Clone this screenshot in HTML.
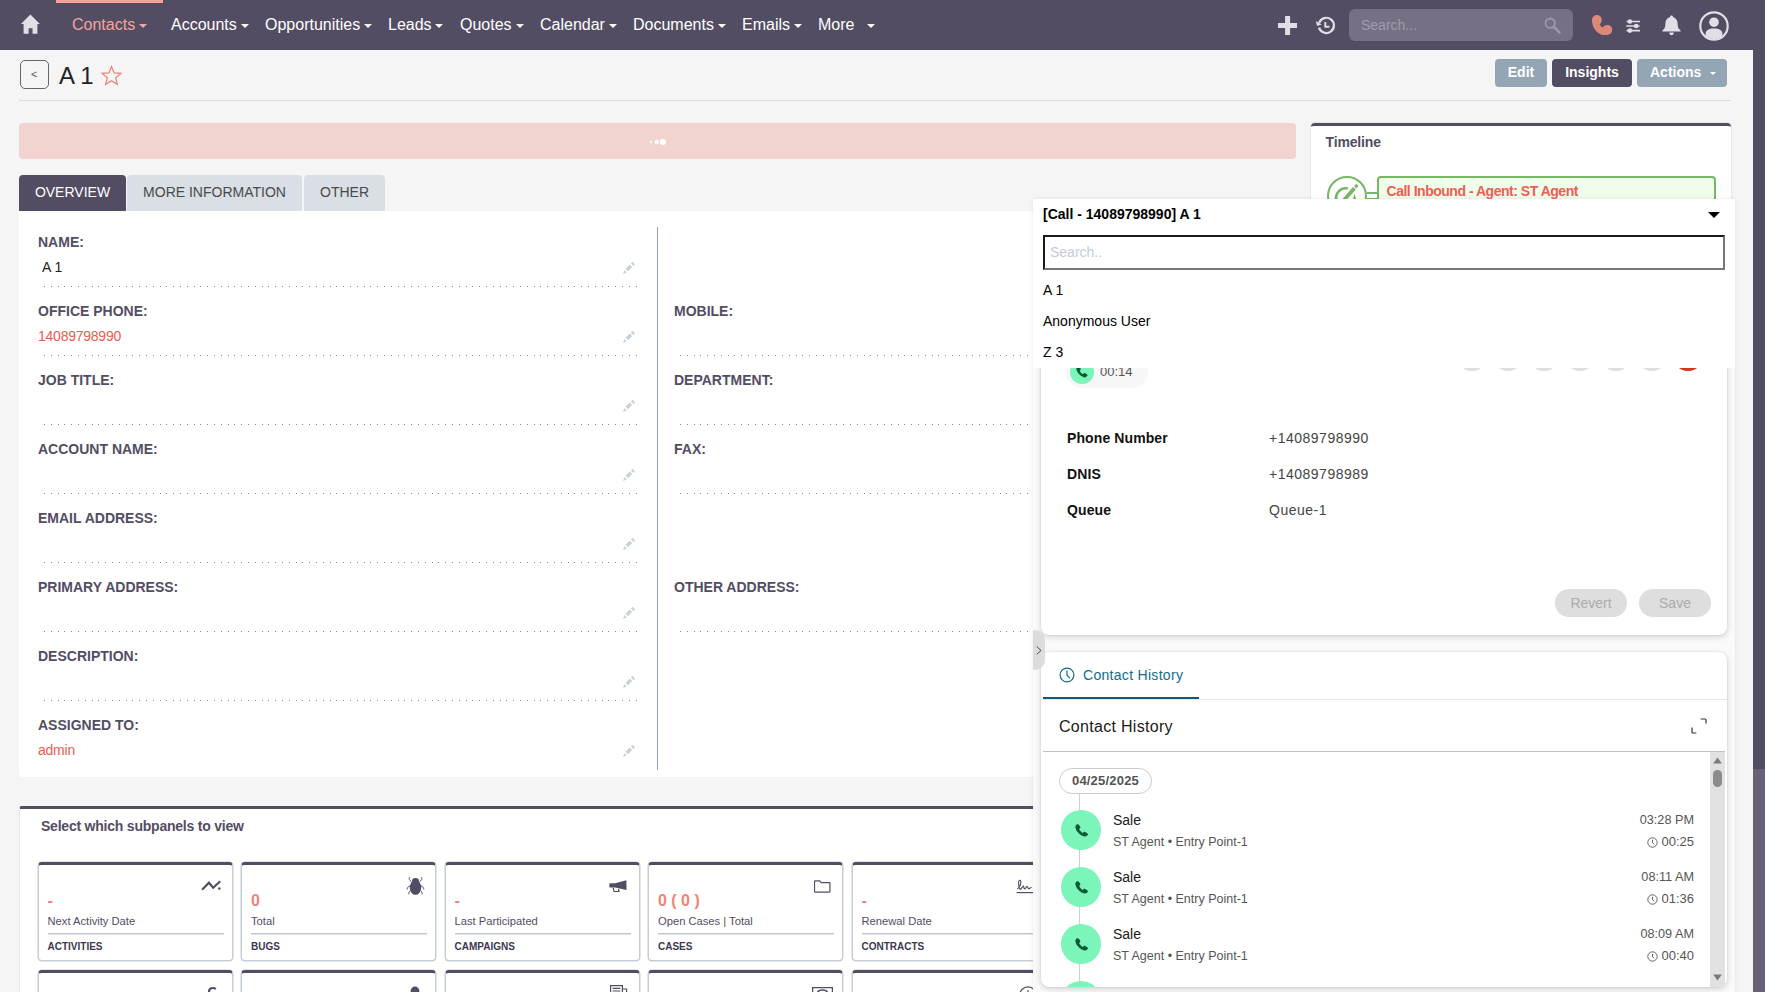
<!DOCTYPE html>
<html lang="en">
<head>
<meta charset="utf-8">
<title>A 1 - Contacts</title>
<style>
*{box-sizing:border-box;margin:0;padding:0}
html,body{width:1765px;height:992px;overflow:hidden}
body{background:#f5f5f5;font-family:"Liberation Sans",Arial,sans-serif;font-size:14px;color:#222;position:relative}
.abs{position:absolute}
.t{position:absolute;white-space:nowrap;line-height:20px}
/* ---------- top nav ---------- */
#nav{position:absolute;left:0;top:0;width:1765px;height:50px;background:#534d64}
#nav .mi{position:absolute;top:15px;font-size:16px;line-height:20px;color:#fff;white-space:nowrap}
#nav .mi.on{color:#f4a49b}
#nav .car{position:absolute;top:24px;width:0;height:0;border-left:4px solid transparent;border-right:4px solid transparent;border-top:4px solid #fff}
#nav .car.on{border-top-color:#f4a49b}
#activebar{position:absolute;left:56px;top:0;width:107px;height:3px;background:#f4a49b}
#gsearch{position:absolute;left:1349px;top:9px;width:224px;height:32px;border-radius:6px;background:#777085}
#gsearch span{position:absolute;left:12px;top:6px;font-size:14px;line-height:20px;color:#a09aae}
/* page scrollbar */
#sbtrack{position:absolute;left:1753px;top:50px;width:12px;height:942px;background:#686179}
#sbthumb{position:absolute;left:1753px;top:0;width:12px;height:769px;background:#534d64}
/* ---------- title row ---------- */
#back{position:absolute;left:20px;top:60px;width:29px;height:29px;border:1px solid #666;border-radius:5px;background:#f5f5f5}
#back span{position:absolute;left:10px;top:3px;font-size:11px;line-height:20px;color:#555}
#title{position:absolute;left:59px;top:61px;font-size:24px;line-height:30px;color:#222;white-space:nowrap}
.btn{position:absolute;top:59px;height:28px;border-radius:4px;background:#94a6b5;color:#fff;font-weight:bold;font-size:14px;line-height:26px;text-align:center;white-space:nowrap}
#hr{position:absolute;left:19px;top:100px;width:1712px;height:1px;background:#dcdcdc}
/* ---------- detail panel ---------- */
#pink{position:absolute;left:19px;top:123px;width:1277px;height:36px;border-radius:4px;background:#f1d4cf}
.tab{position:absolute;top:175px;height:36px;border-radius:4px 4px 0 0;background:#d9dfe4;color:#4a4a4a;font-size:14px;line-height:34px;text-align:center;white-space:nowrap}
.tab.on{background:#534d64;color:#fff}
#detail{position:absolute;left:19px;top:211px;width:1277px;height:566px;background:#fff;border-radius:0 0 4px 4px}
.lbl{position:absolute;font-weight:bold;font-size:14px;line-height:20px;color:#534d64;white-space:nowrap}
.val{position:absolute;font-size:14px;line-height:20px;white-space:nowrap}
.red{color:#e85d4f;letter-spacing:-.24px}
.dots{position:absolute;height:1px;background-image:repeating-linear-gradient(90deg,#8c8c8c 0,#8c8c8c 1px,transparent 1px,transparent 6.8px)}
.pen{position:absolute;width:13px;height:13px}
#vdiv{position:absolute;left:657px;top:227px;width:1px;height:543px;background:#8ea0b2}
/* ---------- subpanels ---------- */
#sub{position:absolute;left:19px;top:806px;width:1277px;height:200px;background:#fff;border-top:3px solid #534d64;border-left:1px solid #e3e6ea;border-radius:3px 3px 0 0}
.card{position:absolute;width:195px;height:99px;background:#fff;border:1px solid #c5cdd6;border-top:3px solid #534d64;border-radius:4px;box-shadow:0 0 0 .5px #c5cdd6}
.card .big{position:absolute;left:9px;top:26px;font-size:16px;font-weight:bold;line-height:20px;color:#f08377;white-space:nowrap}
.card .sm{position:absolute;left:9px;top:46px;font-size:11.2px;line-height:20px;color:#534d64;white-space:nowrap}
.card .ln{position:absolute;left:9px;top:68px;width:176px;height:1px;background:#bcc6d0;box-shadow:0 1px 0 rgba(201,209,218,.55)}
.card .nm{position:absolute;left:9px;top:72px;font-size:10px;font-weight:bold;line-height:20px;color:#3d3850;white-space:nowrap}
.card svg{position:absolute}
/* ---------- timeline ---------- */
#tl{position:absolute;left:1311px;top:123px;width:420px;height:300px;background:#fff;border-top:3px solid #534d64;border-radius:4px 4px 0 0;box-shadow:0 0 2px rgba(0,0,0,.18)}
/* ---------- widget ---------- */
#wx{position:absolute;left:1033px;top:199px;width:702px;height:800px;background:#fafafa;box-shadow:0 0 5px rgba(0,0,0,.09);font-family:"Liberation Sans",Arial,sans-serif}
.wcard{position:absolute;background:#fff;border-radius:8px;box-shadow:0 2px 6px rgba(0,0,0,.16),0 0 2px rgba(0,0,0,.12)}
#dd{position:absolute;left:1033px;top:199px;width:702px;height:169px;background:#fff}
.cb{top:339px;width:32px;height:32px;border-radius:50%;background:#dedede}
.wl{font-size:14px;font-weight:bold;color:#111;letter-spacing:.1px}
.wv{font-size:14px;color:#444;letter-spacing:.5px}
.pill{top:589px;width:72px;height:28px;border-radius:14px;background:#dedede;color:#ababab;font-size:14px;line-height:28px;text-align:center}
</style>
</head>
<body>

<!-- ================= NAV ================= -->
<div id="nav">
  <div id="activebar"></div>
  <svg class="abs" style="left:20px;top:14px" width="21" height="21" viewBox="0 0 21 21"><path d="M10.4 0.5 L19.9 10 L17.4 10 L17.4 19.7 L12.5 19.7 L12.5 14.3 L8.6 14.3 L8.6 19.7 L3.6 19.7 L3.6 10 L0.9 10 Z" fill="#e1dee6"/></svg>
  <span class="mi on" style="left:72px">Contacts</span><i class="car on" style="left:139px"></i>
  <span class="mi" style="left:171px">Accounts</span><i class="car" style="left:241px"></i>
  <span class="mi" style="left:265px">Opportunities</span><i class="car" style="left:364px"></i>
  <span class="mi" style="left:388px">Leads</span><i class="car" style="left:435px"></i>
  <span class="mi" style="left:460px">Quotes</span><i class="car" style="left:516px"></i>
  <span class="mi" style="left:540px">Calendar</span><i class="car" style="left:609px"></i>
  <span class="mi" style="left:633px">Documents</span><i class="car" style="left:718px"></i>
  <span class="mi" style="left:742px">Emails</span><i class="car" style="left:794px"></i>
  <span class="mi" style="left:818px">More</span><i class="car" style="left:867px"></i>

  <!-- plus -->
  <svg class="abs" style="left:1278px;top:16px" width="19.2" height="19.2" viewBox="0 0 19.2 19.2"><path d="M7.1 0h5v7.1h7.1v5h-7.1v7.1h-5v-7.1H0v-5h7.1z" fill="#e1dee6"/></svg>
  <!-- history -->
  <svg class="abs" style="left:1315px;top:16px" width="21" height="20" viewBox="0 0 21 20"><path d="M4.16 6.8 A7.6 7.6 0 1 1 4.03 11.62" fill="none" stroke="#e1dee6" stroke-width="2.2"/><path d="M0.8 4.9 L6.7 8.5 L2.1 10.1 Z" fill="#e1dee6"/><path d="M10.3 5.9 V10.7 H14.4" fill="none" stroke="#e1dee6" stroke-width="1.9"/></svg>
  <div id="gsearch"><span>Search...</span>
    <svg class="abs" style="left:195px;top:8px" width="17" height="17" viewBox="0 0 17 17"><circle cx="6.2" cy="6.2" r="4.7" fill="none" stroke="#9d97ab" stroke-width="1.8"/><path d="M9.8 9.8 L15.4 15.4" stroke="#9d97ab" stroke-width="2.6" stroke-linecap="round"/></svg>
  </div>
  <!-- phone -->
  <svg class="abs" style="left:1591px;top:14px" width="22" height="22" viewBox="0 0 22 22"><circle cx="5.9" cy="6" r="4.9" fill="#e08878"/><circle cx="16.3" cy="15.8" r="4.9" fill="#e08878"/><path d="M4.4 7 C4.6 13.4 9.6 18.4 15.6 17.6" fill="none" stroke="#e08878" stroke-width="6.6" stroke-linecap="round"/></svg>
  <!-- sliders -->
  <svg class="abs" style="left:1626px;top:18px" width="15" height="16" viewBox="0 0 15 16"><g stroke="#e1dee6" stroke-width="1.7"><path d="M0.6 3.5H14M0.2 8H13.6M0.6 12.6H14"/></g><g fill="#e1dee6"><circle cx="3.9" cy="3.5" r="2.3"/><circle cx="10.2" cy="8" r="2.3"/><circle cx="3.9" cy="12.6" r="2.3"/></g></svg>
  <!-- bell -->
  <svg class="abs" style="left:1662px;top:15px" width="19" height="21" viewBox="0 0 19 21"><path d="M9.5 0.4 C10.4 0.4 11 1 11 1.9 C14 2.8 15.6 5.2 15.6 8.6 C15.6 12.4 16.6 14.2 18.6 15.4 V16.4 H0.4 V15.4 C2.4 14.2 3.4 12.4 3.4 8.6 C3.4 5.2 5 2.8 8 1.9 C8 1 8.6 0.4 9.5 0.4 Z M7.2 17.6 H11.8 C11.8 19.2 10.8 20.2 9.5 20.2 C8.2 20.2 7.2 19.2 7.2 17.6 Z" fill="#e1dee6"/></svg>
  <!-- user -->
  <svg class="abs" style="left:1699px;top:11px" width="30" height="30" viewBox="0 0 30 30"><defs><clipPath id="uc"><circle cx="15" cy="15" r="13"/></clipPath></defs><circle cx="15" cy="15" r="13.7" fill="none" stroke="#e1dee6" stroke-width="2.2"/><g clip-path="url(#uc)" fill="#e1dee6"><circle cx="15" cy="11.2" r="4.8"/><path d="M6.6 30 V22.6 C6.6 19.4 9.4 17.4 15 17.4 C20.6 17.4 23.4 19.4 23.4 22.6 V30 Z"/></g></svg>
</div>
<div id="sbtrack"></div><div id="sbthumb"></div>

<!-- ================= TITLE ROW ================= -->
<div id="back"><span>&lt;</span></div>
<div id="title">A 1</div>
<svg class="abs" style="left:101px;top:65px" width="21" height="21" viewBox="0 0 21 21"><path d="M10.5 1.6 L13.1 7.9 L19.9 8.4 L14.7 12.8 L16.3 19.4 L10.5 15.8 L4.7 19.4 L6.3 12.8 L1.1 8.4 L7.9 7.9 Z" fill="none" stroke="#f08377" stroke-width="1.3" stroke-linejoin="miter"/></svg>
<div class="btn" style="left:1495px;width:52px">Edit</div>
<div class="btn" style="left:1552px;width:80px;background:#534d64">Insights</div>
<div class="btn" style="left:1637px;width:90px;text-align:left;padding-left:13px">Actions<i style="position:absolute;left:73px;top:13px;width:0;height:0;border-left:3px solid transparent;border-right:3px solid transparent;border-top:3px solid #fff"></i></div>
<div id="hr"></div>

<!-- ================= DETAIL ================= -->
<div id="pink"><svg class="abs" style="left:627px;top:13px" width="26" height="12" viewBox="0 0 26 12"><circle cx="5" cy="6" r="1.1" fill="#fff"/><circle cx="10.85" cy="6" r="2.2" fill="#fff"/><circle cx="16.9" cy="6" r="3.05" fill="#fff"/></svg></div>
<div class="tab on" style="left:19px;width:107px">OVERVIEW</div>
<div class="tab" style="left:127px;width:175px">MORE INFORMATION</div>
<div class="tab" style="left:304px;width:81px">OTHER</div>
<div id="detail"></div>
<div id="vdiv"></div>
<div class="lbl" style="left:38px;top:232px">NAME:</div>
<div class="val " style="left:42px;top:257px">A 1</div>
<svg class="pen" style="left:622px;top:262px" viewBox="0 0 13 13"><path d="M1.1 11.9 L2.3 8.1 L4.8 10.5 Z M3.5 6.7 L7.7 2.6 L10.2 5.1 L6 9.2 Z M8.9 1.4 L10.1 0.3 C10.4 0 10.8 0 11.1 0.3 L12.7 1.9 C13 2.2 13 2.6 12.7 2.9 L11.5 4 Z" fill="#c8d2dc"/></svg>
<div class="dots" style="left:44px;top:286px;width:592.5px"></div>
<div class="lbl" style="left:38px;top:301px">OFFICE PHONE:</div>
<div class="val red" style="left:38px;top:326px">14089798990</div>
<svg class="pen" style="left:622px;top:331px" viewBox="0 0 13 13"><path d="M1.1 11.9 L2.3 8.1 L4.8 10.5 Z M3.5 6.7 L7.7 2.6 L10.2 5.1 L6 9.2 Z M8.9 1.4 L10.1 0.3 C10.4 0 10.8 0 11.1 0.3 L12.7 1.9 C13 2.2 13 2.6 12.7 2.9 L11.5 4 Z" fill="#c8d2dc"/></svg>
<div class="dots" style="left:44px;top:355px;width:592.5px"></div>
<div class="lbl" style="left:38px;top:370px">JOB TITLE:</div>
<svg class="pen" style="left:622px;top:400px" viewBox="0 0 13 13"><path d="M1.1 11.9 L2.3 8.1 L4.8 10.5 Z M3.5 6.7 L7.7 2.6 L10.2 5.1 L6 9.2 Z M8.9 1.4 L10.1 0.3 C10.4 0 10.8 0 11.1 0.3 L12.7 1.9 C13 2.2 13 2.6 12.7 2.9 L11.5 4 Z" fill="#c8d2dc"/></svg>
<div class="dots" style="left:44px;top:424px;width:592.5px"></div>
<div class="lbl" style="left:38px;top:439px">ACCOUNT NAME:</div>
<svg class="pen" style="left:622px;top:469px" viewBox="0 0 13 13"><path d="M1.1 11.9 L2.3 8.1 L4.8 10.5 Z M3.5 6.7 L7.7 2.6 L10.2 5.1 L6 9.2 Z M8.9 1.4 L10.1 0.3 C10.4 0 10.8 0 11.1 0.3 L12.7 1.9 C13 2.2 13 2.6 12.7 2.9 L11.5 4 Z" fill="#c8d2dc"/></svg>
<div class="dots" style="left:44px;top:493px;width:592.5px"></div>
<div class="lbl" style="left:38px;top:508px">EMAIL ADDRESS:</div>
<svg class="pen" style="left:622px;top:538px" viewBox="0 0 13 13"><path d="M1.1 11.9 L2.3 8.1 L4.8 10.5 Z M3.5 6.7 L7.7 2.6 L10.2 5.1 L6 9.2 Z M8.9 1.4 L10.1 0.3 C10.4 0 10.8 0 11.1 0.3 L12.7 1.9 C13 2.2 13 2.6 12.7 2.9 L11.5 4 Z" fill="#c8d2dc"/></svg>
<div class="dots" style="left:44px;top:562px;width:592.5px"></div>
<div class="lbl" style="left:38px;top:577px">PRIMARY ADDRESS:</div>
<svg class="pen" style="left:622px;top:607px" viewBox="0 0 13 13"><path d="M1.1 11.9 L2.3 8.1 L4.8 10.5 Z M3.5 6.7 L7.7 2.6 L10.2 5.1 L6 9.2 Z M8.9 1.4 L10.1 0.3 C10.4 0 10.8 0 11.1 0.3 L12.7 1.9 C13 2.2 13 2.6 12.7 2.9 L11.5 4 Z" fill="#c8d2dc"/></svg>
<div class="dots" style="left:44px;top:631px;width:592.5px"></div>
<div class="lbl" style="left:38px;top:646px">DESCRIPTION:</div>
<svg class="pen" style="left:622px;top:676px" viewBox="0 0 13 13"><path d="M1.1 11.9 L2.3 8.1 L4.8 10.5 Z M3.5 6.7 L7.7 2.6 L10.2 5.1 L6 9.2 Z M8.9 1.4 L10.1 0.3 C10.4 0 10.8 0 11.1 0.3 L12.7 1.9 C13 2.2 13 2.6 12.7 2.9 L11.5 4 Z" fill="#c8d2dc"/></svg>
<div class="dots" style="left:44px;top:700px;width:592.5px"></div>
<div class="lbl" style="left:38px;top:715px">ASSIGNED TO:</div>
<div class="val red" style="left:38px;top:740px">admin</div>
<svg class="pen" style="left:622px;top:745px" viewBox="0 0 13 13"><path d="M1.1 11.9 L2.3 8.1 L4.8 10.5 Z M3.5 6.7 L7.7 2.6 L10.2 5.1 L6 9.2 Z M8.9 1.4 L10.1 0.3 C10.4 0 10.8 0 11.1 0.3 L12.7 1.9 C13 2.2 13 2.6 12.7 2.9 L11.5 4 Z" fill="#c8d2dc"/></svg>
<div class="lbl" style="left:674px;top:301px">MOBILE:</div>
<div class="dots" style="left:680px;top:355px;width:360px"></div>
<div class="lbl" style="left:674px;top:370px">DEPARTMENT:</div>
<div class="dots" style="left:680px;top:424px;width:360px"></div>
<div class="lbl" style="left:674px;top:439px">FAX:</div>
<div class="dots" style="left:680px;top:493px;width:360px"></div>
<div class="lbl" style="left:674px;top:577px">OTHER ADDRESS:</div>
<div class="dots" style="left:680px;top:631px;width:360px"></div>

<!-- ================= SUBPANELS ================= -->
<div id="sub"></div>
<div class="t" style="left:41px;top:816px;font-size:14px;letter-spacing:-.22px;font-weight:bold;color:#534d64">Select which subpanels to view</div>
<div class="card" style="left:37.5px;top:862px"><div class="big">-</div><div class="sm">Next Activity Date</div><div class="ln"></div><div class="nm">ACTIVITIES</div><svg style="left:162px;top:15px" width="21" height="12" viewBox="0 0 21 12"><path d="M1.1 9.8 L7.9 2.7 L12.2 7.7 L19.2 1.3" fill="none" stroke="#534d64" stroke-width="2.2"/><circle cx="18.3" cy="8.5" r="1.3" fill="#534d64"/></svg></div>
<div class="card" style="left:241.0px;top:862px"><div class="big">0</div><div class="sm">Total</div><div class="ln"></div><div class="nm">BUGS</div><svg style="left:164px;top:11px" width="19" height="20" viewBox="0 0 19 20"><ellipse cx="9.5" cy="11.4" rx="5.7" ry="7.4" fill="#534d64"/><ellipse cx="9.5" cy="4.6" rx="3.4" ry="2.6" fill="#534d64"/><g stroke="#534d64" stroke-width="1" fill="none"><path d="M5.4 5.4 C3.4 4.6 3 3 3.4 1.2"/><path d="M13.6 5.4 C15.6 4.6 16 3 15.6 1.2"/><path d="M4 10 C2 10.4 1.2 11.8 1.2 13.6"/><path d="M15 10 C17 10.4 17.8 11.8 17.8 13.6"/><path d="M4.6 14.6 C3 15.4 2.6 16.8 3 18.4"/><path d="M14.4 14.6 C16 15.4 16.4 16.8 16 18.4"/></g></svg></div>
<div class="card" style="left:444.5px;top:862px"><div class="big">-</div><div class="sm">Last Participated</div><div class="ln"></div><div class="nm">CAMPAIGNS</div><svg style="left:163px;top:15px" width="18" height="13" viewBox="0 0 19 14"><path d="M18.6 0.4 V10.8 L6.4 8.2 H1.2 C0.6 8.2 0.2 7.8 0.2 7.2 V4.6 C0.2 4 0.6 3.6 1.2 3.6 H6.4 Z" fill="#534d64"/><path d="M4.4 8.6 L5.2 12.4 H10.6 L10 9.6" fill="none" stroke="#534d64" stroke-width="1.3"/></svg></div>
<div class="card" style="left:648.0px;top:862px"><div class="big">0 ( 0 )</div><div class="sm">Open Cases | Total</div><div class="ln"></div><div class="nm">CASES</div><svg style="left:165px;top:14.5px" width="17" height="13" viewBox="0 0 19 14"><path d="M1.2 0.7 H6.4 L8 2.6 H17.2 C17.6 2.6 17.8 2.8 17.8 3.2 V12.6 C17.8 13 17.6 13.2 17.2 13.2 H1.2 C0.8 13.2 0.6 13 0.6 12.6 V1.3 C0.6 0.9 0.8 0.7 1.2 0.7 Z" fill="none" stroke="#534d64" stroke-width="1.3"/></svg></div>
<div class="card" style="left:851.5px;top:862px"><div class="big">-</div><div class="sm">Renewal Date</div><div class="ln"></div><div class="nm">CONTRACTS</div><svg style="left:163px;top:14px" width="22" height="15" viewBox="0 0 22 15"><path d="M1.4 10.2 C3.4 8 5.6 4.4 4.6 1.8 C4 0.6 2.6 1.2 2.6 3.6 C2.6 6.4 3 9.6 4.4 10.4 C5.6 9.4 6.4 7.6 7.4 7 C8.2 7.4 7.4 9.6 8.6 10 C9.8 9.6 10.2 7.6 11.2 7.4 C12 7.8 11.6 9.6 12.8 9.8 C13.8 9.4 14.6 8.2 15.6 8.6" fill="none" stroke="#534d64" stroke-width="1.1"/><path d="M0.6 13.6 H21" stroke="#534d64" stroke-width="1.2"/></svg></div>
<div class="card" style="left:37.5px;top:970px"><svg style="left:168px;top:13px" width="12" height="12" viewBox="0 0 12 12"><path d="M2 12 V6 C2 3.4 3.6 2 6 2 C7.2 2 8 2.4 8.8 3" fill="none" stroke="#534d64" stroke-width="2.2"/></svg></div>
<div class="card" style="left:241.0px;top:970px"><svg style="left:168px;top:13px" width="10" height="10" viewBox="0 0 10 10"><circle cx="5" cy="5" r="4.4" fill="#534d64"/></svg></div>
<div class="card" style="left:444.5px;top:970px"><svg style="left:164px;top:12px" width="18" height="12" viewBox="0 0 18 12"><path d="M0.6 12 V0.6 H12.4 V12 M12.4 4 H16.6 V12" fill="none" stroke="#534d64" stroke-width="1.2"/><path d="M2.6 3.4 H10.4 M2.6 6 H10.4 M2.6 8.6 H10.4" stroke="#534d64" stroke-width="1.1"/></svg></div>
<div class="card" style="left:648.0px;top:970px"><svg style="left:163px;top:14px" width="21" height="10" viewBox="0 0 21 10"><path d="M0.6 10 V0.6 H20.4 V10" fill="none" stroke="#534d64" stroke-width="1.3"/><path d="M5.4 10 V6.6 C5.4 4.4 7.4 3 10.5 3 C13.6 3 15.6 4.4 15.6 6.6 V10" fill="none" stroke="#534d64" stroke-width="1.6"/></svg></div>
<div class="card" style="left:851.5px;top:970px"><svg style="left:166px;top:13px" width="18" height="12" viewBox="0 0 18 12"><circle cx="9" cy="9" r="8.2" fill="none" stroke="#534d64" stroke-width="1.2"/><path d="M9 4 V9.4" stroke="#534d64" stroke-width="1.2"/></svg></div>

<!-- ================= TIMELINE ================= -->
<div id="tl"></div>
<div class="t" style="left:1325.5px;top:132px;font-size:14px;letter-spacing:-.15px;font-weight:bold;color:#534d64">Timeline</div>
<div class="abs" style="left:1327px;top:176px;width:40px;height:40px;border:2px solid #77b567;border-radius:50%;background:#fff"></div>
<svg class="abs" style="left:1327px;top:176px" width="40" height="40" viewBox="0 0 40 40"><path d="M9.3 24 A9.7 9.7 0 0 1 20.8 12.5" fill="none" stroke="#77b567" stroke-width="2.7"/><path d="M11.3 28 L25.9 11.1 L28.9 13.4 L15.8 28 Z" fill="#77b567"/><path d="M27.1 9.9 L28.6 8.5 C29.1 8 29.7 8 30.2 8.5 L30.9 9.2 C31.4 9.7 31.4 10.3 30.9 10.8 L29.2 12.4 Z" fill="#77b567"/><path d="M24.6 28 L27.5 17.8 L30.4 28 Z" fill="#77b567"/></svg>
<div class="abs" style="left:1367px;top:192px;width:12px;height:8px;border-top:2px solid #77b567;border-bottom:2px solid #77b567"></div>
<div class="abs" style="left:1377px;top:176px;width:339px;height:60px;border:2px solid #77b567;border-radius:4px;background:#f0fdea"></div>
<div class="t" style="left:1386.5px;top:181px;font-size:14px;letter-spacing:-.48px;font-weight:bold;color:#ef5e54">Call Inbound - Agent: ST Agent</div>


<!-- ================= WEBEX WIDGET ================= -->
<div id="wx"></div>
<!-- call card -->
<div class="wcard" style="left:1041px;top:207px;width:686px;height:428px"></div>
<div class="abs" style="left:1066px;top:356px;width:82px;height:32px;border-radius:16px;background:#f7f7f7"></div>
<div class="abs" style="left:1070px;top:360px;width:24px;height:24px;border-radius:50%;background:#7bf5b9"></div>
<svg class="abs" style="left:1076px;top:366px" width="12" height="12" viewBox="0 0 22 21"><path d="M3.2 0.6 C1.2 1.4 0.2 3.2 0.8 6 C2 11.8 7.6 17.8 14.2 20 C17.2 21 19.6 19.8 20.8 17.6 C21.4 16.4 21 15.4 20 14.8 L16.6 12.8 C15.6 12.2 14.6 12.4 13.8 13.2 L12.6 14.4 C10 13.2 8 11 6.8 8.2 L8 7 C8.8 6.2 9 5.2 8.4 4.2 L6.4 1.2 C5.6 0.2 4.4 0.1 3.2 0.6 Z" fill="#0c5b30"/></svg>
<div class="t" style="left:1100px;top:362px;font-size:13px;color:#555">00:14</div>
<div class="abs cb" style="left:1456px"></div><div class="abs cb" style="left:1492px"></div><div class="abs cb" style="left:1528px"></div><div class="abs cb" style="left:1564px"></div><div class="abs cb" style="left:1600px"></div><div class="abs cb" style="left:1636px"></div><div class="abs cb" style="left:1672px;background:#d4371c"></div>
<div class="t wl" style="left:1067px;top:428px">Phone Number</div><div class="t wv" style="left:1269px;top:428px">+14089798990</div>
<div class="t wl" style="left:1067px;top:464px">DNIS</div><div class="t wv" style="left:1269px;top:464px">+14089798989</div>
<div class="t wl" style="left:1067px;top:500px">Queue</div><div class="t wv" style="left:1269px;top:500px">Queue-1</div>
<div class="abs pill" style="left:1555px">Revert</div>
<div class="abs pill" style="left:1639px">Save</div>
<!-- contact history card -->
<div class="wcard" style="left:1041px;top:652px;width:686px;height:335px;overflow:hidden">
  <div class="abs" style="left:0;top:47px;width:686px;height:1px;background:#e6e6e6"></div>
  <div class="abs" style="left:2px;top:45px;width:156px;height:2px;background:#0a5e7d"></div>
  <svg class="abs" style="left:18px;top:15px" width="16" height="16" viewBox="0 0 16 16"><circle cx="8" cy="8" r="6.9" fill="none" stroke="#0f6d8c" stroke-width="1.2"/><path d="M8 3.8 V8.2 L10.6 10.8" fill="none" stroke="#0f6d8c" stroke-width="1.2" stroke-linecap="round"/></svg>
  <div class="t" style="left:42px;top:13px;font-size:14px;letter-spacing:.3px;color:#0f6d8c">Contact History</div>
  <div class="t" style="left:18px;top:65px;font-size:16px;letter-spacing:.3px;color:#1a1a1a">Contact History</div>
  <svg class="abs" style="left:650px;top:66px" width="16" height="16" viewBox="0 0 16 16"><path d="M9.6 1 H14 C14.6 1 15 1.4 15 2 V5.4 M1 9.6 V14 C1 14.6 1.4 15 2 15 H5.4" fill="none" stroke="#333" stroke-width="1.2"/></svg>
  <div class="abs" style="left:2px;top:99px;width:682px;height:1px;background:#c0c0c0"></div>
  <!-- list -->
  <div class="abs" style="left:38px;top:141px;width:1px;height:200px;background:#cfcfcf"></div>
  <div class="abs" style="left:18px;top:116px;width:93px;height:26px;border:1px solid #ccc;border-radius:13px;background:#fff;text-align:center;font-size:13px;font-weight:bold;line-height:24px;color:#545454;letter-spacing:.2px">04/25/2025</div>
  <div class="abs" style="left:20px;top:158px;width:40px;height:40px;border-radius:50%;background:#7bf5b9"></div>
  <svg class="abs" style="left:33.5px;top:172px" width="13.5" height="13" viewBox="0 0 22 21"><path d="M3.2 0.6 C1.2 1.4 0.2 3.2 0.8 6 C2 11.8 7.6 17.8 14.2 20 C17.2 21 19.6 19.8 20.8 17.6 C21.4 16.4 21 15.4 20 14.8 L16.6 12.8 C15.6 12.2 14.6 12.4 13.8 13.2 L12.6 14.4 C10 13.2 8 11 6.8 8.2 L8 7 C8.8 6.2 9 5.2 8.4 4.2 L6.4 1.2 C5.6 0.2 4.4 0.1 3.2 0.6 Z" fill="#0c5b30"/></svg>
  <div class="t" style="left:72px;top:158px;font-size:14px;color:#1a1a1a">Sale</div>
  <div class="t" style="left:72px;top:180px;font-size:12.5px;color:#555">ST Agent • Entry Point-1</div>
  <div class="t" style="right:33px;top:158px;font-size:12.7px;color:#555">03:28 PM</div>
  <div class="t" style="right:33px;top:180px;font-size:13px;color:#555">00:25</div>
  <svg class="abs" style="left:605.5px;top:184.5px" width="11" height="11" viewBox="0 0 11 11"><circle cx="5.5" cy="5.5" r="4.7" fill="none" stroke="#555" stroke-width="0.9"/><path d="M5.5 2.8 V5.7 L7.3 7.2" fill="none" stroke="#555" stroke-width="0.9"/></svg>
  <div class="abs" style="left:20px;top:215px;width:40px;height:40px;border-radius:50%;background:#7bf5b9"></div>
  <svg class="abs" style="left:33.5px;top:229px" width="13.5" height="13" viewBox="0 0 22 21"><path d="M3.2 0.6 C1.2 1.4 0.2 3.2 0.8 6 C2 11.8 7.6 17.8 14.2 20 C17.2 21 19.6 19.8 20.8 17.6 C21.4 16.4 21 15.4 20 14.8 L16.6 12.8 C15.6 12.2 14.6 12.4 13.8 13.2 L12.6 14.4 C10 13.2 8 11 6.8 8.2 L8 7 C8.8 6.2 9 5.2 8.4 4.2 L6.4 1.2 C5.6 0.2 4.4 0.1 3.2 0.6 Z" fill="#0c5b30"/></svg>
  <div class="t" style="left:72px;top:215px;font-size:14px;color:#1a1a1a">Sale</div>
  <div class="t" style="left:72px;top:237px;font-size:12.5px;color:#555">ST Agent • Entry Point-1</div>
  <div class="t" style="right:33px;top:215px;font-size:12.7px;color:#555">08:11 AM</div>
  <div class="t" style="right:33px;top:237px;font-size:13px;color:#555">01:36</div>
  <svg class="abs" style="left:605.5px;top:241.5px" width="11" height="11" viewBox="0 0 11 11"><circle cx="5.5" cy="5.5" r="4.7" fill="none" stroke="#555" stroke-width="0.9"/><path d="M5.5 2.8 V5.7 L7.3 7.2" fill="none" stroke="#555" stroke-width="0.9"/></svg>
  <div class="abs" style="left:20px;top:272px;width:40px;height:40px;border-radius:50%;background:#7bf5b9"></div>
  <svg class="abs" style="left:33.5px;top:286px" width="13.5" height="13" viewBox="0 0 22 21"><path d="M3.2 0.6 C1.2 1.4 0.2 3.2 0.8 6 C2 11.8 7.6 17.8 14.2 20 C17.2 21 19.6 19.8 20.8 17.6 C21.4 16.4 21 15.4 20 14.8 L16.6 12.8 C15.6 12.2 14.6 12.4 13.8 13.2 L12.6 14.4 C10 13.2 8 11 6.8 8.2 L8 7 C8.8 6.2 9 5.2 8.4 4.2 L6.4 1.2 C5.6 0.2 4.4 0.1 3.2 0.6 Z" fill="#0c5b30"/></svg>
  <div class="t" style="left:72px;top:272px;font-size:14px;color:#1a1a1a">Sale</div>
  <div class="t" style="left:72px;top:294px;font-size:12.5px;color:#555">ST Agent • Entry Point-1</div>
  <div class="t" style="right:33px;top:272px;font-size:12.7px;color:#555">08:09 AM</div>
  <div class="t" style="right:33px;top:294px;font-size:13px;color:#555">00:40</div>
  <svg class="abs" style="left:605.5px;top:298.5px" width="11" height="11" viewBox="0 0 11 11"><circle cx="5.5" cy="5.5" r="4.7" fill="none" stroke="#555" stroke-width="0.9"/><path d="M5.5 2.8 V5.7 L7.3 7.2" fill="none" stroke="#555" stroke-width="0.9"/></svg>
  <div class="abs" style="left:20px;top:329px;width:40px;height:40px;border-radius:50%;background:#7bf5b9"></div>
  <svg class="abs" style="left:33.5px;top:343px" width="13.5" height="13" viewBox="0 0 22 21"><path d="M3.2 0.6 C1.2 1.4 0.2 3.2 0.8 6 C2 11.8 7.6 17.8 14.2 20 C17.2 21 19.6 19.8 20.8 17.6 C21.4 16.4 21 15.4 20 14.8 L16.6 12.8 C15.6 12.2 14.6 12.4 13.8 13.2 L12.6 14.4 C10 13.2 8 11 6.8 8.2 L8 7 C8.8 6.2 9 5.2 8.4 4.2 L6.4 1.2 C5.6 0.2 4.4 0.1 3.2 0.6 Z" fill="#0c5b30"/></svg>
  <!-- scrollbar -->
  <div class="abs" style="left:669px;top:100px;width:15px;height:235px;background:#e1e1e1"></div>
  <svg class="abs" style="left:672px;top:105px" width="9" height="7" viewBox="0 0 9 7"><path d="M4.5 0.4 L8.8 6.6 H0.2 Z" fill="#7a7a7a"/></svg>
  <div class="abs" style="left:672px;top:118px;width:9px;height:17px;border-radius:4.5px;background:#8b8b8b"></div>
  <svg class="abs" style="left:672px;top:322px" width="9" height="7" viewBox="0 0 9 7"><path d="M4.5 6.6 L8.8 0.4 H0.2 Z" fill="#7a7a7a"/></svg>
</div>
<!-- collapse handle -->
<div class="abs" style="left:1033px;top:630px;width:12px;height:40px;border-radius:0 10px 10px 0;background:#dcdcdc"></div>
<svg class="abs" style="left:1036px;top:646px" width="6" height="9" viewBox="0 0 6 9"><path d="M0.8 0.6 L5 4.5 L0.8 8.4" fill="none" stroke="#333" stroke-width="0.9"/></svg>
<!-- dropdown overlay -->
<div id="dd">
  <div class="t" style="left:10px;top:5px;font-size:14px;font-weight:bold;color:#000">[Call - 14089798990] A 1</div>
  <div class="abs" style="left:675px;top:13px;width:0;height:0;border-left:6px solid transparent;border-right:6px solid transparent;border-top:6px solid #000"></div>
  <div class="abs" style="left:10px;top:36px;width:682px;height:35px;border:2px solid;border-color:#1a1a1a #767676 #767676 #1a1a1a;background:#fff"><span class="t" style="left:5px;top:5px;font-size:14px;color:#c3ccd8">Search..</span></div>
  <div class="t" style="left:10px;top:81px;font-size:14px;color:#000">A 1</div>
  <div class="t" style="left:10px;top:112px;font-size:14px;color:#000">Anonymous User</div>
  <div class="t" style="left:10px;top:143px;font-size:14px;color:#000">Z 3</div>
</div>


</body>
</html>
